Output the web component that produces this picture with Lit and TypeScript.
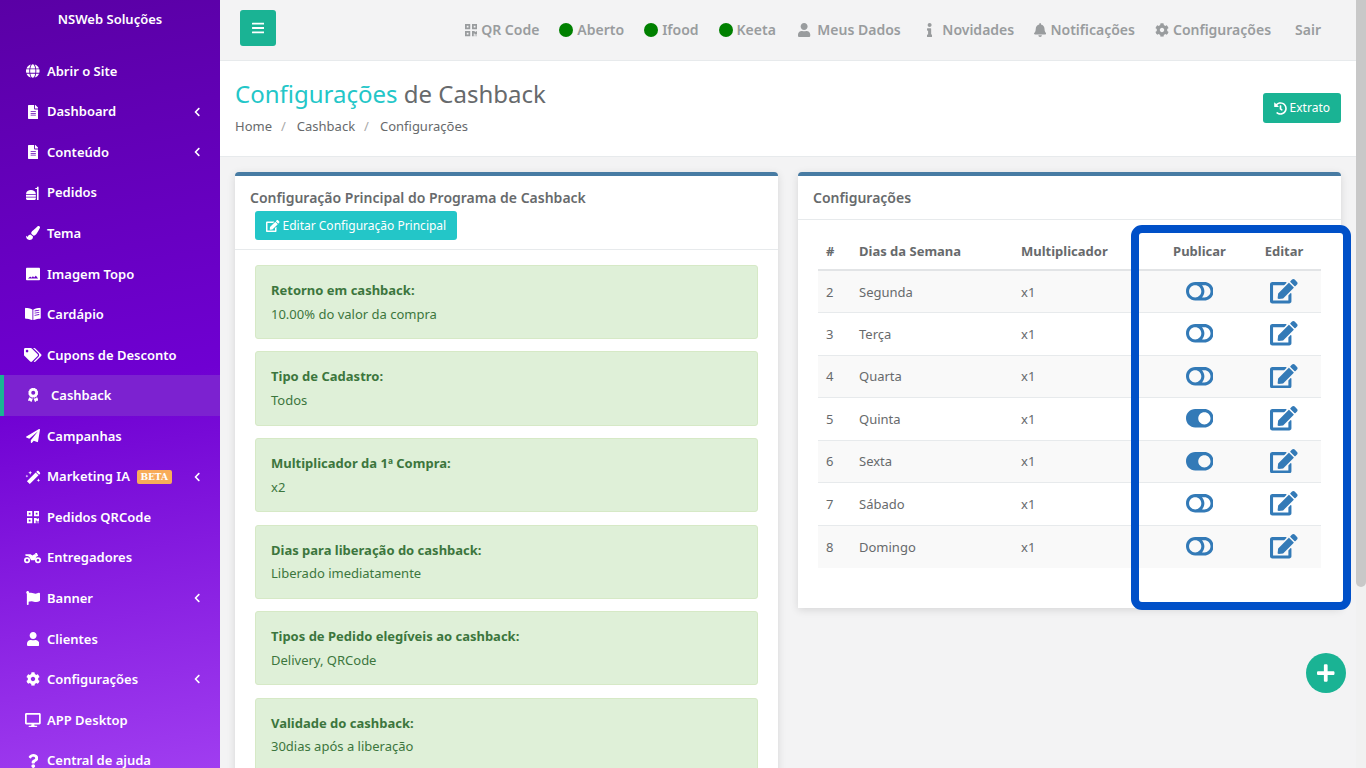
import { LitElement, html, css, svg } from 'lit';
import { customElement } from 'lit/decorators.js';

// font awesome 5 style shapes: [viewBox width, path]
const ICONS: Record<string, [number, string]> = {
  globe: [496, 'M336.5 160C322 70.7 287.8 8 248 8s-74 62.7-88.5 152h177zM152 256c0 22.2 1.2 43.5 3.3 64h185.300c2.100-20.500 3.300-41.800 3.300-64s-1.200-43.500-3.300-64H155.300c-2.100 20.500-3.300 41.800-3.300 64zm324.700-96c-28.600-67.900-86.500-120.400-158-141.600 24.400 33.800 41.200 84.700 50 141.600h108zM177.200 18.400C105.800 39.600 47.800 92.100 19.300 160h108c8.700-56.900 25.500-107.800 49.900-141.600zM487.400 192H372.700c2.100 21 3.300 42.500 3.300 64s-1.200 43-3.300 64h114.600c5.500-20.500 8.600-41.800 8.600-64s-3.100-43.500-8.500-64zM120 256c0-21.500 1.200-43 3.300-64H8.600C3.200 212.500 0 233.800 0 256s3.200 43.500 8.600 64h114.600c-2-21-3.200-42.500-3.200-64zm39.500 96c14.500 89.300 48.700 152 88.500 152s74-62.700 88.500-152h-177zm159.300 141.600c71.400-21.200 129.400-73.700 158-141.600h-108c-8.800 56.900-25.600 107.800-50 141.600zM19.300 352c28.600 67.900 86.500 120.400 158 141.600-24.400-33.800-41.200-84.700-50-141.600h-108z'],
  file: [384, 'M224 136V0H24C10.700 0 0 10.700 0 24v464c0 13.300 10.700 24 24 24h336c13.300 0 24-10.700 24-24V160H248c-13.200 0-24-10.800-24-24zm64 236c0 6.600-5.400 12-12 12H108c-6.600 0-12-5.400-12-12v-8c0-6.600 5.400-12 12-12h168c6.600 0 12 5.400 12 12v8zm0-64c0 6.600-5.400 12-12 12H108c-6.600 0-12-5.400-12-12v-8c0-6.600 5.400-12 12-12h168c6.600 0 12 5.400 12 12v8zm0-72v8c0 6.600-5.400 12-12 12H108c-6.600 0-12-5.400-12-12v-8c0-6.600 5.400-12 12-12h168c6.600 0 12 5.400 12 12zm96-114.100v6.100H256V0h6.100c6.400 0 12.500 2.500 17 7l97.900 98c4.500 4.500 7 10.600 7 16.900z'],
  food: [512, 'M400 30h60v482h-60zM340 70h60v40h-60zM0 290C10 190 90 150 180 150s170 40 180 140zM0 320h360v70H0zM0 420h360v50c0 25-20 42-45 42H45c-25 0-45-17-45-42z'],
  brush: [512, 'M167.020 309.340c-40.120 2.580-76.530 17.860-97.190 72.300-2.350 6.210-8 9.980-14.590 9.980-11.110 0-45.460-27.670-55.250-34.350C0 439.620 37.930 512 128 512c75.860 0 128-43.770 128-120.190 0-3.110-.65-6.080-.97-9.130l-88.010-73.340zM457.890 0c-15.160 0-29.370 6.710-40.210 16.450C213.270 199.050 192 203.340 192 257.090c0 13.700 3.250 26.760 8.730 38.700l63.820 53.180c7.210 1.800 14.640 3.030 22.390 3.030 62.110 0 98.110-45.470 211.160-256.460 7.380-14.350 13.900-29.850 13.900-45.990C512 20.640 486 0 457.890 0z'],
  image: [512, 'M40 24h432c22 0 40 18 40 40v384c0 22-18 40-40 40H40c-22 0-40-18-40-40V64c0-22 18-40 40-40zM70 420h372l-72-94c-6-8-16-8-22 0l-50 60-34-40c-6-8-16-8-22 0l-40 46-34-34c-6-6-16-6-22 0z'],
  book: [576, 'M542.220 32.050c-54.800 3.110-163.720 14.430-230.960 55.590-4.640 2.840-7.270 7.890-7.270 13.170v363.870c0 11.550 12.630 18.850 23.280 13.490 69.180-34.820 169.230-44.320 218.700-46.920 16.890-.89 30.020-14.430 30.020-30.660V62.750c.010-17.710-15.350-31.740-33.770-30.700zM350 130l170-30v30l-170 30zm0 80l170-30v30l-170 30zm0 80l170-30v30l-170 30zM264.730 87.640C197.500 46.480 88.580 35.170 33.780 32.050 15.360 31.010 0 45.040 0 62.750V400.600c0 16.240 13.130 29.780 30.020 30.660 49.490 2.600 149.590 12.110 218.770 46.950 10.620 5.350 23.210-1.940 23.210-13.460V100.630c0-5.290-2.620-10.140-7.270-12.990z'],
  tags: [640, 'M497.941 225.941L286.059 14.059A48 48 0 0 0 252.118 0H48C21.490 0 0 21.490 0 48v204.118a48 48 0 0 0 14.059 33.941l211.882 211.882c18.744 18.745 49.136 18.746 67.882 0l204.118-204.118c18.745-18.745 18.745-49.137 0-67.882zM112 160c-26.510 0-48-21.490-48-48s21.490-48 48-48 48 21.490 48 48-21.490 48-48 48zm513.941 133.823L421.823 497.941c-18.745 18.745-49.137 18.745-67.882 0l-.36-.360L527.640 323.522c16.999-16.999 26.360-39.600 26.360-63.640s-9.362-46.641-26.360-63.640L331.397 0h48.721a48 48 0 0 1 33.941 14.059l211.882 211.882c18.745 18.745 18.745 49.137 0 67.882z'],
  award: [384, 'M97.120 362.630c-8.690-8.690-4.160-6.240-25.120-11.850-9.510-2.550-17.870-7.450-25.430-13.320L1.200 448.700c-4.390 10.770 3.810 22.470 15.430 22.030l52.690-2.010L105.560 507c8 8.440 22.040 5.810 26.430-4.960l52.050-127.620c-10.840 6.040-22.870 9.580-35.310 9.580-19.500 0-37.820-7.590-51.610-21.370zM382.800 448.700l-45.370-111.240c-7.560 5.880-15.920 10.770-25.430 13.320-21.070 5.640-16.450 3.180-25.120 11.850-13.790 13.780-32.120 21.370-51.620 21.370-12.440 0-24.470-3.550-35.310-9.580L252 502.040c4.390 10.770 18.440 13.400 26.430 4.960l36.250-38.280 52.690 2.010c11.620.44 19.820-11.270 15.430-22.030zM263 340c15.280-15.550 17.030-14.210 38.790-20.140 13.890-3.790 24.750-14.840 28.470-28.980 7.480-28.400 5.540-24.970 25.950-45.750 10.170-10.350 14.140-25.440 10.420-39.580-7.470-28.380-7.480-24.420 0-52.830 3.720-14.140-.25-29.230-10.420-39.580-20.410-20.780-18.470-17.360-25.950-45.750-3.720-14.140-14.580-25.190-28.470-28.980-27.880-7.610-24.520-5.620-44.950-26.410-10.170-10.350-25-14.400-38.890-10.610-27.870 7.600-23.980 7.610-51.900 0-13.890-3.790-28.720.25-38.890 10.610-20.410 20.780-17.050 18.800-44.940 26.410-13.890 3.790-24.750 14.840-28.470 28.980-7.470 28.390-5.540 24.970-25.950 45.750-10.170 10.350-14.150 25.440-10.420 39.580 7.470 28.360 7.480 24.400 0 52.820-3.720 14.140.25 29.230 10.420 39.590 20.410 20.780 18.470 17.350 25.950 45.750 3.720 14.140 14.580 25.190 28.470 28.980C104.600 325.960 106.270 325 121 340c13.230 13.470 33.840 15.880 49.740 5.820a39.676 39.676 0 0 1 42.530 0c15.890 10.060 36.500 7.650 49.730-5.820zM120 175.960c0-40 32-72.020 72-72.020s72 32.020 72 72.020-32 72.020-72 72.020-72-32.020-72-72.020z'],
  plane: [512, 'M476 3.200L12.500 270.600c-18.100 10.400-15.800 35.600 2.200 43.200L121 358.400l287.300-253.200c5.500-4.900 13.300 2.600 8.600 8.300L176 407v80.500c0 23.600 28.500 32.900 42.500 15.800L282 426l124.600 52.200c14.200 6 30.400-2.900 33-18.200l72-432C515 7.800 493.300-6.800 476 3.200z'],
  magic: [576, 'M390 90l105 105L175 512 70 407zM440 40c18-18 40-18 58 0l47 47c18 18 18 40 0 58l-30 30-105-105zM190 30l22 48 48 22-48 22-22 48-22-48-48-22 48-22zM70 170l16 36 36 16-36 16-16 36-16-36-36-16 36-16zM490 310l20 44 44 20-44 20-20 44-20-44-44-20 44-20z'],
  qrcode: [448, 'M0 224h192V32H0v192zM64 96h64v64H64V96zm192-64v192h192V32H256zm128 128h-64V96h64v64zM0 480h192V288H0v192zm64-128h64v64H64v-64zm352-64h32v128h-96v-32h-32v96h-64V288h96v32h64v-32zm0 160h32v32h-32v-32zm-64 0h32v32h-32v-32z'],
  moto: [640, 'M512 224a112 112 0 1 0 0 224 112 112 0 0 0 0-224zm0 64a48 48 0 1 1 0 96 48 48 0 0 1 0-96zM112 224a112 112 0 1 0 0 224 112 112 0 0 0 0-224zm0 64a48 48 0 1 1 0 96 48 48 0 0 1 0-96zM90 120h150l70 40 70-40h50l-30-50h70l50 100-70 40-60 130H260l-60-110c-20-40-60-50-110-50-30 0-50-10-50-30s20-30 50-30z'],
  flag: [512, 'M349.565 98.783C295.978 98.783 251.721 64 184.348 64c-24.955 0-47.309 4.384-68.045 12.013a55.947 55.947 0 0 0 3.586-23.562C118.117 24.015 94.806 1.206 66.338.048 34.345-1.254 8 24.296 8 56c0 19.026 9.497 35.825 24 45.945V488c0 13.255 10.745 24 24 24h16c13.255 0 24-10.745 24-24v-94.400c28.311-12.064 63.582-22.122 114.435-22.122 53.588 0 97.844 34.783 165.217 34.783 48.169 0 86.667-16.294 122.505-40.858C506.840 359.452 512 349.571 512 339.045v-243.100c0-23.393-24.269-38.870-45.485-29.016-34.338 15.948-76.454 31.854-116.950 31.854z'],
  user: [448, 'M224 256c70.700 0 128-57.300 128-128S294.700 0 224 0 96 57.300 96 128s57.300 128 128 128zm89.600 32h-16.700c-22.200 10.200-46.900 16-72.900 16s-50.600-5.800-72.900-16h-16.700C60.200 288 0 348.200 0 422.400V464c0 26.500 21.500 48 48 48h352c26.500 0 48-21.500 48-48v-41.600c0-74.200-60.200-134.400-134.400-134.400z'],
  cog: [512, 'M487.400 315.700l-42.600-24.600c4.300-23.200 4.300-47 0-70.200l42.600-24.600c4.900-2.800 7.100-8.600 5.500-14-11.100-35.600-30-67.800-54.700-94.600-3.800-4.100-10-5.100-14.800-2.300L380.800 110c-17.900-15.400-38.500-27.300-60.800-35.100V25.800c0-5.600-3.900-10.500-9.400-11.700-36.700-8.200-74.300-7.800-109.200 0-5.500 1.200-9.400 6.100-9.400 11.700V75c-22.200 7.900-42.800 19.800-60.800 35.100L88.700 85.500c-4.900-2.800-11-1.900-14.800 2.300-24.700 26.700-43.600 58.900-54.700 94.600-1.700 5.400.6 11.200 5.500 14L67.300 221c-4.300 23.200-4.300 47 0 70.200l-42.600 24.600c-4.900 2.800-7.100 8.600-5.500 14 11.100 35.600 30 67.800 54.700 94.600 3.800 4.100 10 5.100 14.800 2.300l42.600-24.600c17.900 15.400 38.500 27.300 60.800 35.100v49.200c0 5.600 3.900 10.500 9.400 11.700 36.700 8.200 74.300 7.800 109.200 0 5.500-1.200 9.400-6.100 9.400-11.700v-49.200c22.200-7.900 42.800-19.800 60.800-35.100l42.600 24.600c4.900 2.800 11 1.900 14.800-2.300 24.700-26.700 43.600-58.900 54.700-94.600 1.500-5.500-.7-11.300-5.600-14.100zM256 336c-44.100 0-80-35.900-80-80s35.900-80 80-80 80 35.900 80 80-35.900 80-80 80z'],
  desktop: [576, 'M528 0H48C21.500 0 0 21.500 0 48v320c0 26.500 21.500 48 48 48h192l-16 48h-72c-13.300 0-24 10.700-24 24s10.700 24 24 24h272c13.300 0 24-10.700 24-24s-10.700-24-24-24h-72l-16-48h192c26.500 0 48-21.500 48-48V48c0-26.500-21.500-48-48-48zm-16 352H64V64h448v288z'],
  question: [384, 'M202.021 0C122.202 0 70.503 32.703 29.914 91.026c-7.363 10.580-5.093 25.086 5.178 32.874l43.138 32.709c10.373 7.865 25.132 6.026 33.253-4.148 25.049-31.381 43.630-49.449 82.757-49.449 30.764 0 68.816 19.799 68.816 49.631 0 22.552-18.617 34.134-48.993 51.164-35.423 19.860-82.299 44.576-82.299 106.405V320c0 13.255 10.745 24 24 24h72.471c13.255 0 24-10.745 24-24v-5.773c0-42.860 125.268-44.645 125.268-160.627C377.504 66.256 286.902 0 202.021 0zM192 373.459c-38.196 0-69.271 31.075-69.271 69.271 0 38.195 31.075 69.270 69.271 69.270s69.271-31.075 69.271-69.271-31.075-69.270-69.271-69.270z'],
  chevron: [320, 'M34.520 239.030L228.870 44.690c9.370-9.370 24.570-9.370 33.940 0l22.670 22.670c9.360 9.360 9.370 24.520.040 33.900L131.490 256l154.020 154.750c9.340 9.380 9.320 24.540-.040 33.900l-22.670 22.670c-9.370 9.370-24.570 9.370-33.940 0L34.520 272.970c-9.370-9.370-9.370-24.570 0-33.940z'],
  bars: [448, 'M16 132h416c8.837 0 16-7.163 16-16V76c0-8.837-7.163-16-16-16H16C7.163 60 0 67.163 0 76v40c0 8.837 7.163 16 16 16zm0 160h416c8.837 0 16-7.163 16-16v-40c0-8.837-7.163-16-16-16H16c-8.837 0-16 7.163-16 16v40c0 8.837 7.163 16 16 16zm0 160h416c8.837 0 16-7.163 16-16v-40c0-8.837-7.163-16-16-16H16c-8.837 0-16 7.163-16 16v40c0 8.837 7.163 16 16 16z'],
  bell: [448, 'M224 512c35.320 0 63.970-28.650 63.970-64H160.030c0 35.350 28.650 64 63.970 64zm215.390-149.710c-19.320-20.760-55.470-51.990-55.470-154.290 0-77.700-54.480-139.900-127.940-155.160V32c0-17.670-14.320-32-31.980-32s-31.980 14.330-31.980 32v20.840C118.560 68.100 64.080 130.300 64.080 208c0 102.300-36.150 133.530-55.470 154.290-6 6.450-8.660 14.160-8.610 21.710.11 16.400 12.980 32 32.100 32h383.800c19.120 0 32-15.600 32.100-32 .05-7.550-2.610-15.270-8.610-21.710z'],
  info: [192, 'M20 424.229h20V279.771H20c-11.046 0-20-8.954-20-20V212c0-11.046 8.954-20 20-20h112c11.046 0 20 8.954 20 20v212.229h20c11.046 0 20 8.954 20 20V492c0 11.046-8.954 20-20 20H20c-11.046 0-20-8.954-20-20v-47.771c0-11.046 8.954-20 20-20zM96 0C56.235 0 24 32.235 24 72s32.235 72 72 72 72-32.235 72-72S135.764 0 96 0z'],
  history: [512, 'M504 255.531c.253 136.640-111.180 248.372-247.820 248.468-59.015.042-113.223-20.530-155.822-54.911-11.077-8.940-11.905-25.541-1.839-35.607l11.267-11.267c8.609-8.609 22.353-9.551 31.891-1.984C173.062 425.135 212.781 440 256 440c101.705 0 184-82.311 184-184 0-101.705-82.311-184-184-184-48.814 0-93.149 18.969-126.068 49.932l50.754 50.754c10.080 10.080 2.941 27.314-11.313 27.314H24c-8.837 0-16-7.163-16-16V38.627c0-14.254 17.234-21.393 27.314-11.314l49.372 49.372C129.209 34.136 189.552 8 256 8c136.810 0 247.747 110.780 248 247.531zm-180.912 78.784l9.823-12.630c8.138-10.463 6.253-25.542-4.210-33.679L288 256.349V152c0-13.255-10.745-24-24-24h-16c-13.255 0-24 10.745-24 24v135.651l65.409 50.874c10.463 8.137 25.541 6.253 33.679-4.210z'],
  edit: [576, 'M402.6 83.2l90.2 90.2c3.8 3.8 3.8 10 0 13.8L274.4 405.600l-92.800 10.300c-12.400 1.400-22.900-9.100-21.500-21.500l10.300-92.800L388.800 83.200c3.800-3.800 10-3.800 13.800 0zm162-22.900l-48.800-48.800c-15.200-15.200-39.900-15.200-55.200 0l-35.400 35.400c-3.800 3.800-3.800 10 0 13.800l90.200 90.200c3.800 3.800 10 3.800 13.800 0l35.400-35.400c15.200-15.300 15.200-40 0-55.200zM384 346.200V448H64V128h229.800c3.200 0 6.200-1.300 8.500-3.500l40-40c7.600-7.600 2.200-20.500-8.500-20.500H48C21.500 64 0 85.500 0 112v352c0 26.500 21.500 48 48 48h352c26.500 0 48-21.500 48-48V306.200c0-10.700-12.900-16-20.500-8.500l-40 40c-2.200 2.300-3.500 5.300-3.500 8.500z'],
  toggleOff: [576, 'M384 64H192C86 64 0 150 0 256s86 192 192 192h192c106 0 192-86 192-192S490 64 384 64zM64 256c0-70.700 57.200-128 128-128 70.700 0 128 57.200 128 128 0 70.700-57.200 128-128 128-70.700 0-128-57.200-128-128zm320 128h-48.900c65.200-72.800 65.200-183.100 0-256H384c70.500 0 128 57.400 128 128 0 70.500-57.400 128-128 128z'],
  toggleOn: [576, 'M384 64H192C86 64 0 150 0 256s86 192 192 192h192c106 0 192-86 192-192S490 64 384 64zm0 320c-70.800 0-128-57.300-128-128 0-70.800 57.300-128 128-128 70.800 0 128 57.300 128 128 0 70.800-57.300 128-128 128z'],
  plus: [448, 'M416 208H272V64c0-17.670-14.330-32-32-32h-32c-17.670 0-32 14.330-32 32v144H32c-17.670 0-32 14.330-32 32v32c0 17.670 14.330 32 32 32h144v144c0 17.670 14.330 32 32 32h32c17.670 0 32-14.330 32-32V304h144c17.670 0 32-14.330 32-32v-32c0-17.670-14.330-32-32-32z'],
};

// height of the glyph in px, width follows the viewBox
function icon(name: string, size = 14) {
  const [w, d] = ICONS[name];
  return html`<svg class="ico" width=${(w / 512) * size} height=${size} viewBox="0 0 ${w} 512" fill="currentColor">${svg`<path d=${d}></path>`}</svg>`;
}

const MENU = [
  { i: 'globe', t: 'Abrir o Site' },
  { i: 'file', t: 'Dashboard', more: true },
  { i: 'file', t: 'Conteúdo', more: true },
  { i: 'food', t: 'Pedidos' },
  { i: 'brush', t: 'Tema' },
  { i: 'image', t: 'Imagem Topo' },
  { i: 'book', t: 'Cardápio' },
  { i: 'tags', t: 'Cupons de Desconto' },
  { i: 'award', t: 'Cashback', active: true },
  { i: 'plane', t: 'Campanhas' },
  { i: 'magic', t: 'Marketing IA', more: true, beta: true },
  { i: 'qrcode', t: 'Pedidos QRCode' },
  { i: 'moto', t: 'Entregadores' },
  { i: 'flag', t: 'Banner', more: true },
  { i: 'user', t: 'Clientes' },
  { i: 'cog', t: 'Configurações', more: true },
  { i: 'desktop', t: 'APP Desktop' },
  { i: 'question', t: 'Central de ajuda' },
];

const ALERTS = [
  ['Retorno em cashback:', '10.00% do valor da compra'],
  ['Tipo de Cadastro:', 'Todos'],
  ['Multiplicador da 1ª Compra:', 'x2'],
  ['Dias para liberação do cashback:', 'Liberado imediatamente'],
  ['Tipos de Pedido elegíveis ao cashback:', 'Delivery, QRCode'],
  ['Validade do cashback:', '30dias após a liberação'],
];

const DAYS = [
  [2, 'Segunda', false],
  [3, 'Terça', false],
  [4, 'Quarta', false],
  [5, 'Quinta', true],
  [6, 'Sexta', true],
  [7, 'Sábado', false],
  [8, 'Domingo', false],
] as const;

@customElement('app-root')
export class AppRoot extends LitElement {
  static styles = css`
    :host {
      display: flex;
      position: relative;
      width: 1366px;
      height: 768px;
      overflow: hidden;
      background: #f3f3f4;
      color: #676a6c;
      font-family: 'Noto Sans', 'Open Sans', sans-serif;
      font-size: 13px;
      line-height: 18.57px;
    }
    .ico { display: block; flex: none; }

    .side {
      width: 220px;
      flex: none;
      background: linear-gradient(170deg, #5a00a5 0%, #6f00d2 50%, #a03df0 100%);
      color: #fff;
      font-weight: 600;
    }
    .brand { height: 50.700px; padding-top: 10px; box-sizing: border-box; text-align: center; }
    .item { display: flex; align-items: center; height: 40.565px; padding: 0 20px 0 25px; box-sizing: border-box; }
    .item.active { background: #7c22d0; border-left: 4px solid #1ab394; padding-left: 21px; }
    .slot { width: 16px; display: flex; justify-content: center; flex: none; margin-right: 6px; }
    .item.active .slot { margin-right: 10px; }
    .beta { margin-left: 7px; padding: 0 3.500px; height: 14px; line-height: 14px; font-size: 9px; font-family: 'DejaVu Serif', serif; font-weight: 700; background: #f8ac59; border-radius: 2px; }
    .chev { margin-left: auto; }

    .main { flex: 1; min-width: 0; display: flex; flex-direction: column; }
    .top { height: 61px; flex: none; box-sizing: border-box; border-bottom: 1px solid #e7eaec; display: flex; align-items: center; padding: 0 35px 0 20px; color: #999c9e; font-size: 14px; font-weight: 600; }
    .burger { width: 36px; height: 36px; margin-top: -4px; border-radius: 3px; background: #1ab394; color: #fff; display: flex; align-items: center; justify-content: center; }
    .links { margin-left: auto; display: flex; align-items: center; gap: 20px; }
    .link { display: flex; align-items: center; gap: 4px; }
    .fw { width: 17.500px; display: flex; justify-content: center; }
    .sair { margin-left: 4px; }
    .dot { width: 14px; height: 14px; border-radius: 50%; background: #008000; }

    .head { height: 96px; flex: none; box-sizing: border-box; background: #fff; border-bottom: 1px solid #e7eaec; padding: 0 15px; display: flex; justify-content: space-between; align-items: flex-start; }
    h2 { margin: 18px 0 0; font-size: 24px; font-weight: 400; line-height: 30px; }
    h2 span { color: #23c6c8; }
    .crumbs { display: flex; margin-top: 8px; }
    .crumbs i { font-style: normal; color: #a9a9a9; padding: 0 11px 0 9px; }
    .btn-ext { margin-top: 32px; height: 30px; padding: 0 11px; display: flex; align-items: center; gap: 3px; background: #1ab394; border-radius: 3px; color: #fff; font-size: 12px; }

    .cols { flex: 1; display: flex; align-items: flex-start; gap: 20px; padding: 15px 15px 0; min-height: 0; }
    .card { flex: 1; min-width: 0; background: #fff; border-top: 4px solid #477ba3; border-radius: 4px 4px 0 0; box-shadow: 0 2px 8px rgba(0, 0, 0, 0.12); }
    .card-title { font-size: 14px; font-weight: 600; color: #676a6c; padding: 12px 15px 0; line-height: 20px; }
    .card-btn { display: inline-flex; align-items: center; gap: 3px; box-sizing: border-box; height: 29px; margin-left: 20px; margin-top: 3px; padding: 1px 11px 0; background: #23c6c8; color: #fff; font-size: 12px; border-radius: 3px; }
    .left-head { height: 73.800px; box-sizing: border-box; border-bottom: 1px solid #e7eaec; }
    .right-head { height: 44px; box-sizing: border-box; border-bottom: 1px solid #e7eaec; }
    .alerts { padding: 15px 20px; display: flex; flex-direction: column; gap: 12.400px; }
    .alert { height: 74.200px; box-sizing: border-box; flex: none; padding: 15px; background: #dff0d8; border: 1px solid #d6e9c6; border-radius: 3px; color: #3c763d; }
    .alert b { display: block; font-weight: 700; margin-bottom: 5.200px; }

    .right { padding: 12px 20px 39.700px; }
    table { width: 503px; border-collapse: collapse; table-layout: fixed; }
    th { height: 38.300px; box-sizing: border-box; font-weight: 700; text-align: left; padding: 2px 8px 0; border-bottom: 2px solid #e2e4e6; }
    td { height: 42.530px; box-sizing: border-box; padding: 0 8px; border-top: 1px solid #e7eaec; }
    tbody tr:first-child td { border-top: none; }
    tbody tr:nth-child(odd) { background: #f9f9f9; }
    .c { text-align: center; }
    td .ico { margin: -1px auto 0; color: #337ab7; }

    .bar { width: 10px; flex: none; background: #f1f1f1; }
    .thumb { height: 587px; background: #c8c8c8; border-radius: 0 0 5px 5px; }

    .mark { position: absolute; left: 1131px; top: 225px; width: 220px; height: 385px; box-sizing: border-box; border: 8px solid #0050c8; border-radius: 11px; box-shadow: inset -2px 0 0 #fff; pointer-events: none; }
    .fab { position: absolute; left: 1306px; top: 653px; width: 40px; height: 40px; border-radius: 50%; background: #1ab394; color: #fff; display: flex; align-items: center; justify-content: center; }
  `;

  render() {
    return html`
      <aside class="side">
        <div class="brand">NSWeb Soluções</div>
        ${MENU.map(
          (m) => html`
            <div class="item ${m.active ? 'active' : ''}">
              <span class="slot">${icon(m.i)}</span>
              <span>${m.t}</span>
              ${m.beta ? html`<span class="beta">BETA</span>` : ''}
              ${m.more ? html`<span class="chev">${icon('chevron', 10)}</span>` : ''}
            </div>
          `,
        )}
      </aside>

      <div class="main">
        <div class="top">
          <div class="burger">${icon('bars', 14)}</div>
          <div class="links">
            <span class="link">${icon('qrcode', 14)} QR Code</span>
            <span class="link"><span class="dot"></span> Aberto</span>
            <span class="link"><span class="dot"></span> Ifood</span>
            <span class="link"><span class="dot"></span> Keeta</span>
            <span class="link"><span class="fw">${icon('user', 14)}</span> Meus Dados</span>
            <span class="link"><span class="fw">${icon('info', 14)}</span> Novidades</span>
            <span class="link">${icon('bell', 14)} Notificações</span>
            <span class="link">${icon('cog', 14)} Configurações</span>
            <span class="link sair">Sair</span>
          </div>
        </div>

        <div class="head">
          <div>
            <h2><span>Configurações</span> de Cashback</h2>
            <div class="crumbs">Home<i>/</i>Cashback<i>/</i>Configurações</div>
          </div>
          <div class="btn-ext">${icon('history', 13)} Extrato</div>
        </div>

        <div class="cols">
          <section class="card">
            <div class="left-head">
              <div class="card-title">Configuração Principal do Programa de Cashback</div>
              <div class="card-btn">${icon('edit', 12)} Editar Configuração Principal</div>
            </div>
            <div class="alerts">
              ${ALERTS.map(([a, b]) => html`<div class="alert"><b>${a}</b>${b}</div>`)}
            </div>
          </section>

          <section class="card">
            <div class="right-head"><div class="card-title">Configurações</div></div>
            <div class="right">
              <table>
                <colgroup>
                  <col style="width:33px" /><col style="width:162px" /><col style="width:139px" /><col style="width:95px" /><col style="width:74px" />
                </colgroup>
                <thead>
                  <tr><th>#</th><th>Dias da Semana</th><th>Multiplicador</th><th class="c">Publicar</th><th class="c">Editar</th></tr>
                </thead>
                <tbody>
                  ${DAYS.map(
                    ([n, d, on]) => html`
                      <tr>
                        <td>${n}</td>
                        <td>${d}</td>
                        <td>x1</td>
                        <td>${icon(on ? 'toggleOn' : 'toggleOff', 24.5)}</td>
                        <td>${icon('edit', 24.5)}</td>
                      </tr>
                    `,
                  )}
                </tbody>
              </table>
            </div>
          </section>
        </div>
      </div>

      <div class="bar"><div class="thumb"></div></div>
      <div class="mark"></div>
      <div class="fab">${icon('plus', 20)}</div>
    `;
  }
}
